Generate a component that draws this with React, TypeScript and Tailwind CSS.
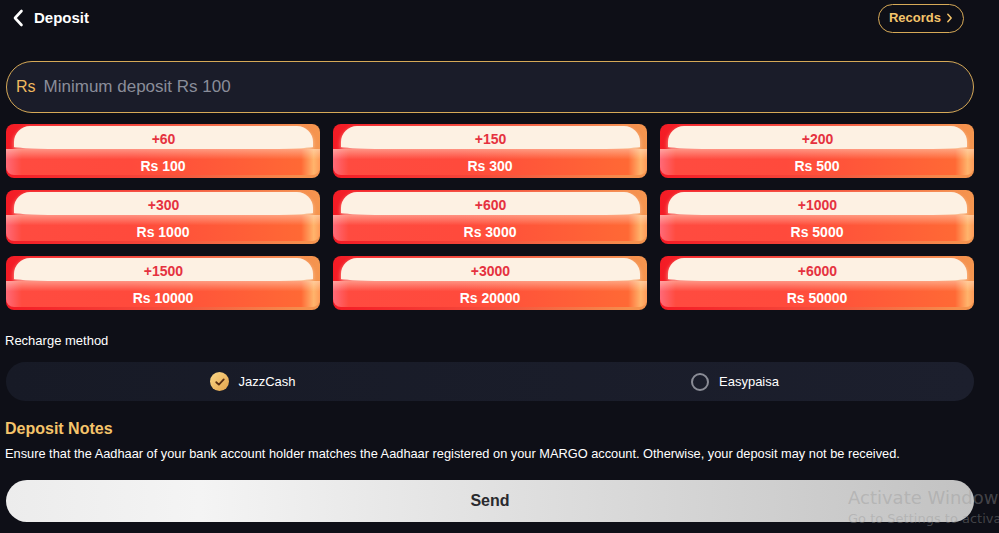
const amounts = [
  { bonus: '+60', amount: 'Rs 100' },
  { bonus: '+150', amount: 'Rs 300' },
  { bonus: '+200', amount: 'Rs 500' },
  { bonus: '+300', amount: 'Rs 1000' },
  { bonus: '+600', amount: 'Rs 3000' },
  { bonus: '+1000', amount: 'Rs 5000' },
  { bonus: '+1500', amount: 'Rs 10000' },
  { bonus: '+3000', amount: 'Rs 20000' },
  { bonus: '+6000', amount: 'Rs 50000' },
];

function AmountCard({ bonus, amount }: { bonus: string; amount: string }) {
  return (
    <div className="h-[54px] rounded-[8px] overflow-hidden flex flex-col bg-[linear-gradient(90deg,#f41b25,#f4473a_45%,#f5964f)]">
      <div className="h-[26px] pt-[2px] pl-[8px] pr-[7px]">
        <div className="h-full rounded-t-[16px] rounded-b-[50%_3px] bg-[#fdf1e3] shadow-[0_2px_4px_rgba(255,225,200,0.7)] flex items-center justify-center pt-[1px] text-[#e5323f] font-bold text-[14px] leading-none">
          {bonus}
        </div>
      </div>
      <div className="h-[26px] -mt-[1px] rounded-b-[8px] flex items-center justify-center pt-[7px] text-white font-bold text-[14px] leading-none bg-[linear-gradient(180deg,rgba(255,235,215,0.45),rgba(255,235,215,0)_40%),linear-gradient(90deg,#ff6a78,#ff4b40_5%,#ff4a3c_40%,#ff6935_94%,#ffb46c_98%,#ff9a58)]">
        {amount}
      </div>
      <div className="h-[2px]" />
    </div>
  );
}

export default function App() {
  return (
    <div className="relative w-full min-h-[533px] bg-[#0e0f17] overflow-hidden font-['Liberation_Sans',Arial,sans-serif]">
      <div className="w-[968px] ml-[6px]">
        <div className="h-[36px] flex items-center justify-between">
          <div className="flex items-center gap-[10px] text-white">
            <svg viewBox="0 0 12 18" className="w-[12px] h-[18px] ml-[6px]">
              <path d="M9.5 2 L3 9 L9.5 16" fill="none" stroke="white" strokeWidth="2.6" strokeLinecap="round" strokeLinejoin="round" />
            </svg>
            <span className="text-[15px] font-bold">Deposit</span>
          </div>
          <button className="h-[29px] mr-[10px] px-[10px] rounded-full border border-[#d6a957] text-[#f4c46b] text-[13px] font-bold flex items-center gap-[5px]">
            Records
            <svg viewBox="0 0 8 12" className="w-[7px] h-[10px]">
              <path d="M2 1.5 L6 6 L2 10.5" fill="none" stroke="#f4c46b" strokeWidth="1.8" strokeLinecap="round" strokeLinejoin="round" />
            </svg>
          </button>
        </div>

        <div className="mt-[25px] h-[52px] rounded-full border border-[#d6a957] bg-[#1a1c29] flex items-center pl-[9px] text-[17px]">
          <span className="text-[#f0b95f] text-[16px]">Rs</span>
          <span className="ml-[8px] text-[#8a8d99]">Minimum deposit Rs 100</span>
        </div>

        <div className="mt-[11px] grid grid-cols-3 gap-x-[13px] gap-y-[12px]">
          {amounts.map((a) => (
            <AmountCard key={a.amount} bonus={a.bonus} amount={a.amount} />
          ))}
        </div>

        <div className="mt-[23px] text-white text-[13px] leading-[16px] -ml-[1px]">Recharge method</div>

        <div className="mt-[13px] h-[39px] rounded-full bg-[linear-gradient(90deg,#171a26,#1c1f2d)] flex">
          <div className="flex-1 flex items-center justify-center gap-[9px] pl-[8px]">
            <span className="w-[19px] h-[19px] rounded-full bg-[linear-gradient(135deg,#fbd989,#e4a24a)] flex items-center justify-center">
              <svg viewBox="0 0 16 16" className="w-[12px] h-[12px]">
                <path d="M3 8.3 L6.5 11.5 L13 4.5" fill="none" stroke="#5a2f12" strokeWidth="2.4" strokeLinecap="round" strokeLinejoin="round" />
              </svg>
            </span>
            <span className="text-white text-[13px]">JazzCash</span>
          </div>
          <div className="flex-1 flex items-center justify-center gap-[10px] pl-[4px]">
            <span className="w-[18px] h-[18px] rounded-full border-2 border-[#8a8c96]" />
            <span className="text-white text-[13px]">Easypaisa</span>
          </div>
        </div>

        <div className="mt-[19px] text-[#f5c46a] text-[16px] font-bold leading-[18px] -ml-[1px]">Deposit Notes</div>
        <div className="mt-[8px] text-white text-[12.8px] leading-[16px] -ml-[1px] whitespace-nowrap">
          Ensure that the Aadhaar of your bank account holder matches the Aadhaar registered on your MARGO account. Otherwise, your deposit may not be received.
        </div>

        <button className="mt-[18px] w-full h-[42px] rounded-full bg-[linear-gradient(90deg,#ececec,#f4f4f4_20%,#dedede_55%,#c2c2c2)] text-[#2a2a2e] text-[16px] font-bold">
          Send
        </button>
      </div>

      <div className="absolute left-[848px] top-[487px] text-[rgba(150,150,150,0.4)] font-['DejaVu_Sans',sans-serif] whitespace-nowrap pointer-events-none">
        <div className="text-[18px] leading-[22px]">Activate Windows</div>
        <div className="text-[13px] leading-[16px] mt-[2px]">Go to Settings to activate Windows.</div>
      </div>
    </div>
  );
}
